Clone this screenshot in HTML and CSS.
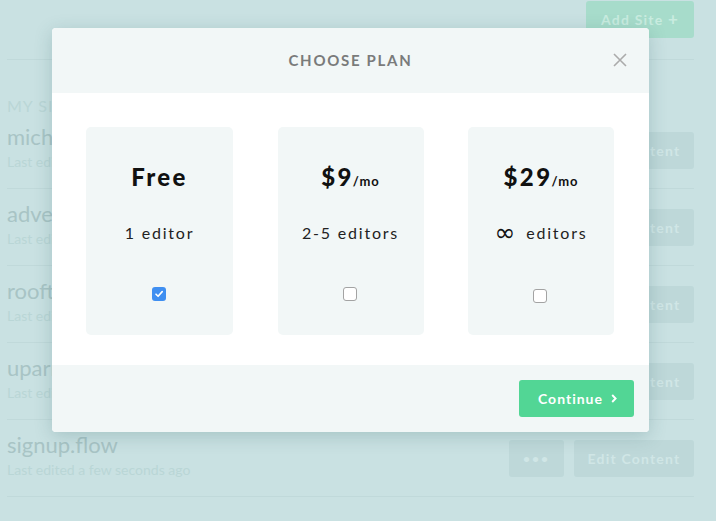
FILE: index.html
```html
<!DOCTYPE html>
<html>
<head>
<meta charset="utf-8">
<link rel="stylesheet" href="styles.css">
</head>
<body>
<div class="page">
  <div class="topbar">
    <button class="add-site">Add Site <span class="plus">+</span></button>
  </div>
  <div class="section-title">MY SITES</div>
  <div class="row">
    <div class="info"><div class="name">michael</div><div class="meta">Last edited</div></div>
    <div class="actions"><button class="btn edit">Edit Content</button></div>
  </div>
  <div class="row">
    <div class="info"><div class="name">advent</div><div class="meta">Last edited</div></div>
    <div class="actions"><button class="btn edit">Edit Content</button></div>
  </div>
  <div class="row">
    <div class="info"><div class="name">rooftop</div><div class="meta">Last edited</div></div>
    <div class="actions"><button class="btn edit">Edit Content</button></div>
  </div>
  <div class="row">
    <div class="info"><div class="name">uparrow</div><div class="meta">Last edited</div></div>
    <div class="actions"><button class="btn edit">Edit Content</button></div>
  </div>
  <div class="row">
    <div class="info"><div class="name">signup.flow</div><div class="meta">Last edited a few seconds ago</div></div>
    <div class="actions"><button class="btn more">&bull;&bull;&bull;</button><button class="btn edit">Edit Content</button></div>
  </div>
</div>

<div class="modal">
  <div class="modal-header">
    <div class="modal-title">CHOOSE PLAN</div>
    <svg class="close" width="14" height="14" viewBox="0 0 14 14"><path d="M1 1L13 13M13 1L1 13" stroke="#ababab" stroke-width="1.6" fill="none"/></svg>
  </div>
  <div class="modal-body">
    <div class="card">
      <div class="price">Free</div>
      <div class="editors">1 editor</div>
      <span class="check checked"><svg width="14" height="14" viewBox="0 0 14 14"><path d="M4 7.2L6.1 9.3L10.2 4.6" stroke="#fff" stroke-width="1.6" fill="none" stroke-linecap="round" stroke-linejoin="round"/></svg></span>
    </div>
    <div class="card">
      <div class="price">$9<span class="per">/mo</span></div>
      <div class="editors">2-5 editors</div>
      <span class="check"></span>
    </div>
    <div class="card">
      <div class="price">$29<span class="per">/mo</span></div>
      <div class="editors"><span class="inf">&infin;</span> editors</div>
      <span class="check low"></span>
    </div>
  </div>
  <div class="modal-footer">
    <button class="continue">Continue<svg class="chev" width="6" height="9" viewBox="0 0 6 9"><path d="M1.2 1L4.6 4.5L1.2 8" stroke="#fff" stroke-width="1.9" fill="none"/></svg></button>
  </div>
</div>
</body>
</html>
```
FILE: styles.css
```css
* { box-sizing: border-box; }
html, body { margin: 0; padding: 0; }
body {
  width: 716px;
  height: 521px;
  overflow: hidden;
  background: #c9e1e2;
  font-family: Lato, "Liberation Sans", sans-serif;
  position: relative;
}
.page {
  padding: 0 22px 0 7px;
}
.topbar {
  height: 60px;
  padding-top: 1px;
  display: flex;
  justify-content: flex-end;
  border-bottom: 1px solid #c0d9da;
}
.add-site {
  width: 108px;
  height: 37px;
  border: none;
  border-radius: 3px;
  background: #a7dccb;
  color: #c9ece0;
  font-family: inherit;
  font-weight: 700;
  font-size: 14px;
  letter-spacing: 1.2px;
}
.plus { font-size: 17px; line-height: 0; }
.section-title {
  padding-top: 39px;
  line-height: 14px;
  height: 52px;
  font-size: 16px;
  color: #bad6d6;
  letter-spacing: 1px;
}
.row {
  height: 77px;
  border-bottom: 1px solid #c0d9da;
  display: flex;
  justify-content: space-between;
  align-items: center;
}
.info { padding-bottom: 2px; }
.name {
  font-size: 22px;
  line-height: 26px;
  color: #a8c4c5;
}
.meta {
  font-size: 14px;
  line-height: 24px;
  color: #b9d6d6;
}
.actions { display: flex; gap: 10px; }
.btn {
  height: 37px;
  border: none;
  border-radius: 3px;
  background: #bed8d9;
  color: #d0e6e6;
  font-family: inherit;
  font-weight: 700;
  font-size: 14px;
  letter-spacing: 1.2px;
}
.btn.edit { width: 120px; }
.btn.more { width: 55px; letter-spacing: 2px; font-size: 12px; }

.modal {
  position: absolute;
  left: 52px;
  top: 28px;
  width: 597px;
  height: 404px;
  background: #fff;
  border-radius: 4px;
  overflow: hidden;
  display: flex;
  flex-direction: column;
  box-shadow: 0 4px 18px rgba(40, 90, 95, 0.22);
}
.modal-header {
  height: 65px;
  padding-bottom: 1px;
  background: #f2f7f7;
  display: flex;
  align-items: center;
  justify-content: center;
  position: relative;
}
.modal-title {
  font-size: 15px;
  font-weight: 700;
  color: #7a7b7b;
  letter-spacing: 1.7px;
}
.close {
  position: absolute;
  right: 22px;
  top: 25px;
}
.modal-body {
  height: 272px;
  padding: 34px 35px 30px 34px;
  display: flex;
  justify-content: space-between;
}
.card {
  width: 147px;
  height: 208px;
  background: #f2f7f7;
  border-radius: 5px;
  display: flex;
  flex-direction: column;
  align-items: center;
  padding-top: 35px;
}
.card + .card { width: 146px; }
.price {
  height: 30px;
  line-height: 30px;
  font-size: 24px;
  font-weight: 900;
  letter-spacing: 2.4px;
  color: #111;
}
.per {
  font-size: 13px;
  font-weight: 700;
  letter-spacing: 1px;
  margin-left: -1px;
}
.editors {
  margin-top: 30px;
  height: 22px;
  line-height: 22px;
  font-size: 16px;
  letter-spacing: 1.8px;
  color: #222;
}
.inf {
  font-family: "DejaVu Sans", sans-serif;
  font-size: 25px;
  line-height: 22px;
  letter-spacing: 0;
  margin-right: 5px;
  vertical-align: -2px;
  color: #111;
}
.check {
  margin-top: 43px;
  margin-right: 2px;
  width: 14px;
  height: 14px;
  border: 1px solid #a3a3a3;
  border-radius: 3px;
  background: #fff;
  display: block;
}
.check.low { margin-top: 45px; }
.check.checked {
  border: none;
  background: #3f8ff1;
}
.check svg { display: block; }
.modal-footer {
  flex: 1;
  background: #f2f7f7;
  display: flex;
  justify-content: flex-end;
  padding: 15px 15px 0 0;
}
.continue {
  width: 115px;
  height: 37px;
  border: none;
  border-radius: 3px;
  background: #52d695;
  color: #fff;
  font-family: inherit;
  font-weight: 700;
  font-size: 14px;
  letter-spacing: 1px;
  display: flex;
  align-items: center;
  justify-content: center;
  gap: 8px;
  padding: 0 0 1px 2px;
}
.chev { display: block; margin-top: 1px; }
```
